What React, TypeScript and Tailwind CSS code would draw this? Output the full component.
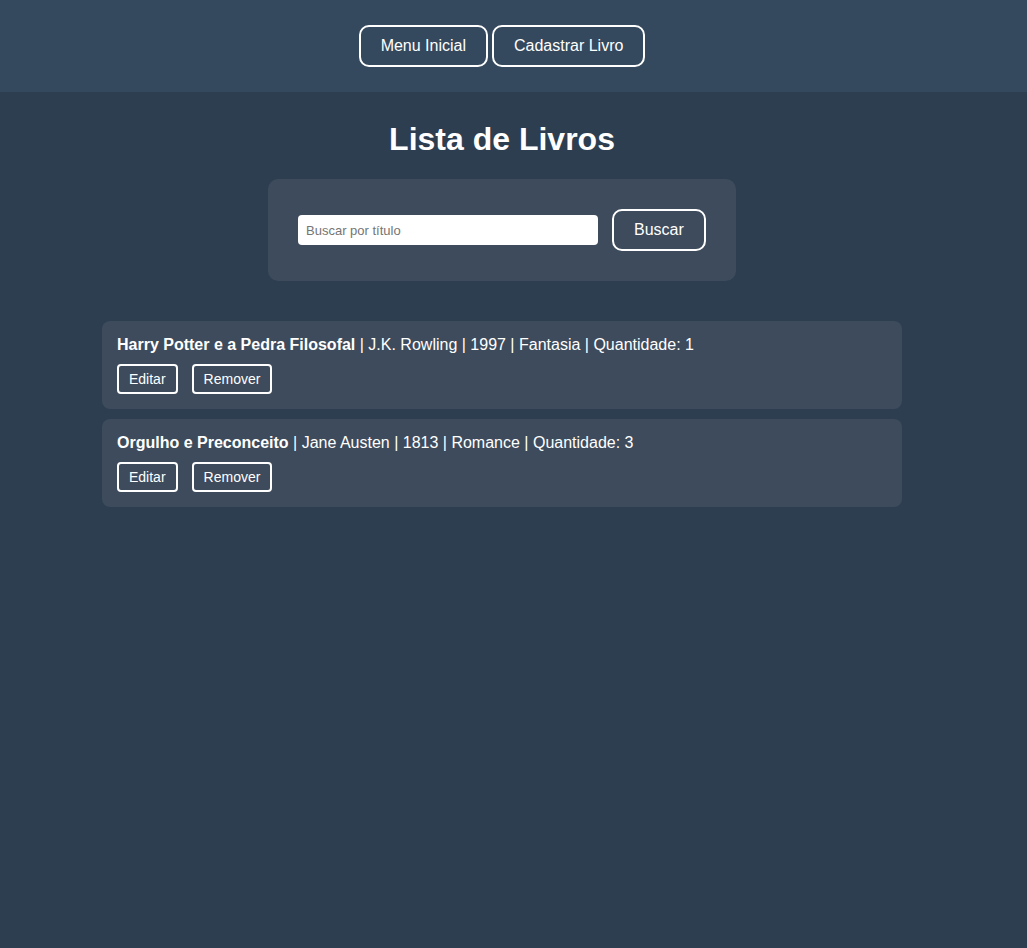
const livros = [
  { titulo: "Harry Potter e a Pedra Filosofal", autor: "J.K. Rowling", ano: 1997, genero: "Fantasia", quantidade: 1 },
  { titulo: "Orgulho e Preconceito", autor: "Jane Austen", ano: 1813, genero: "Romance", quantidade: 3 },
];

function NavButton({ children }: { children: React.ReactNode }) {
  return (
    <button
      type="button"
      className="rounded-[10px] border-2 border-white px-5 py-[10px] text-base leading-[18px] text-white"
    >
      {children}
    </button>
  );
}

function SmallButton({ children }: { children: React.ReactNode }) {
  return (
    <button
      type="button"
      className="rounded-[4px] border-2 border-white px-[10px] py-[5px] text-sm leading-4 text-white"
    >
      {children}
    </button>
  );
}

export default function App() {
  return (
    <div className="min-h-screen bg-[#2c3e50] font-['Liberation_Sans',Arial,sans-serif] text-white">
      <header className="flex h-[92px] items-center justify-center gap-1 bg-[#34495e] pr-[23px]">
        <NavButton>Menu Inicial</NavButton>
        <NavButton>Cadastrar Livro</NavButton>
      </header>

      <main className="flex flex-col items-center pr-[23px]">
        <h1 className="mt-[29px] text-[32px] font-bold leading-[37px]">Lista de Livros</h1>

        <div className="mt-[21px] flex w-[468px] items-center gap-[14px] rounded-[10px] bg-[#3d4b5c] p-[30px]">
          <input
            type="text"
            placeholder="Buscar por título"
            className="h-[30px] w-[300px] rounded-[4px] bg-white px-2 text-[13px] text-black placeholder:text-[#757575] outline-none"
          />
          <NavButton>Buscar</NavButton>
        </div>

        <ul className="mt-10 flex w-[800px] flex-col gap-[10px]">
          {livros.map((l) => (
            <li key={l.titulo} className="rounded-[8px] bg-[#3d4b5c] p-[15px]">
              <p className="text-base leading-[18px]">
                <strong className="font-bold">{l.titulo}</strong> | {l.autor} | {l.ano} | {l.genero} | Quantidade:{" "}
                {l.quantidade}
              </p>
              <div className="mt-[10px] flex gap-[14px]">
                <SmallButton>Editar</SmallButton>
                <SmallButton>Remover</SmallButton>
              </div>
            </li>
          ))}
        </ul>
      </main>
    </div>
  );
}
